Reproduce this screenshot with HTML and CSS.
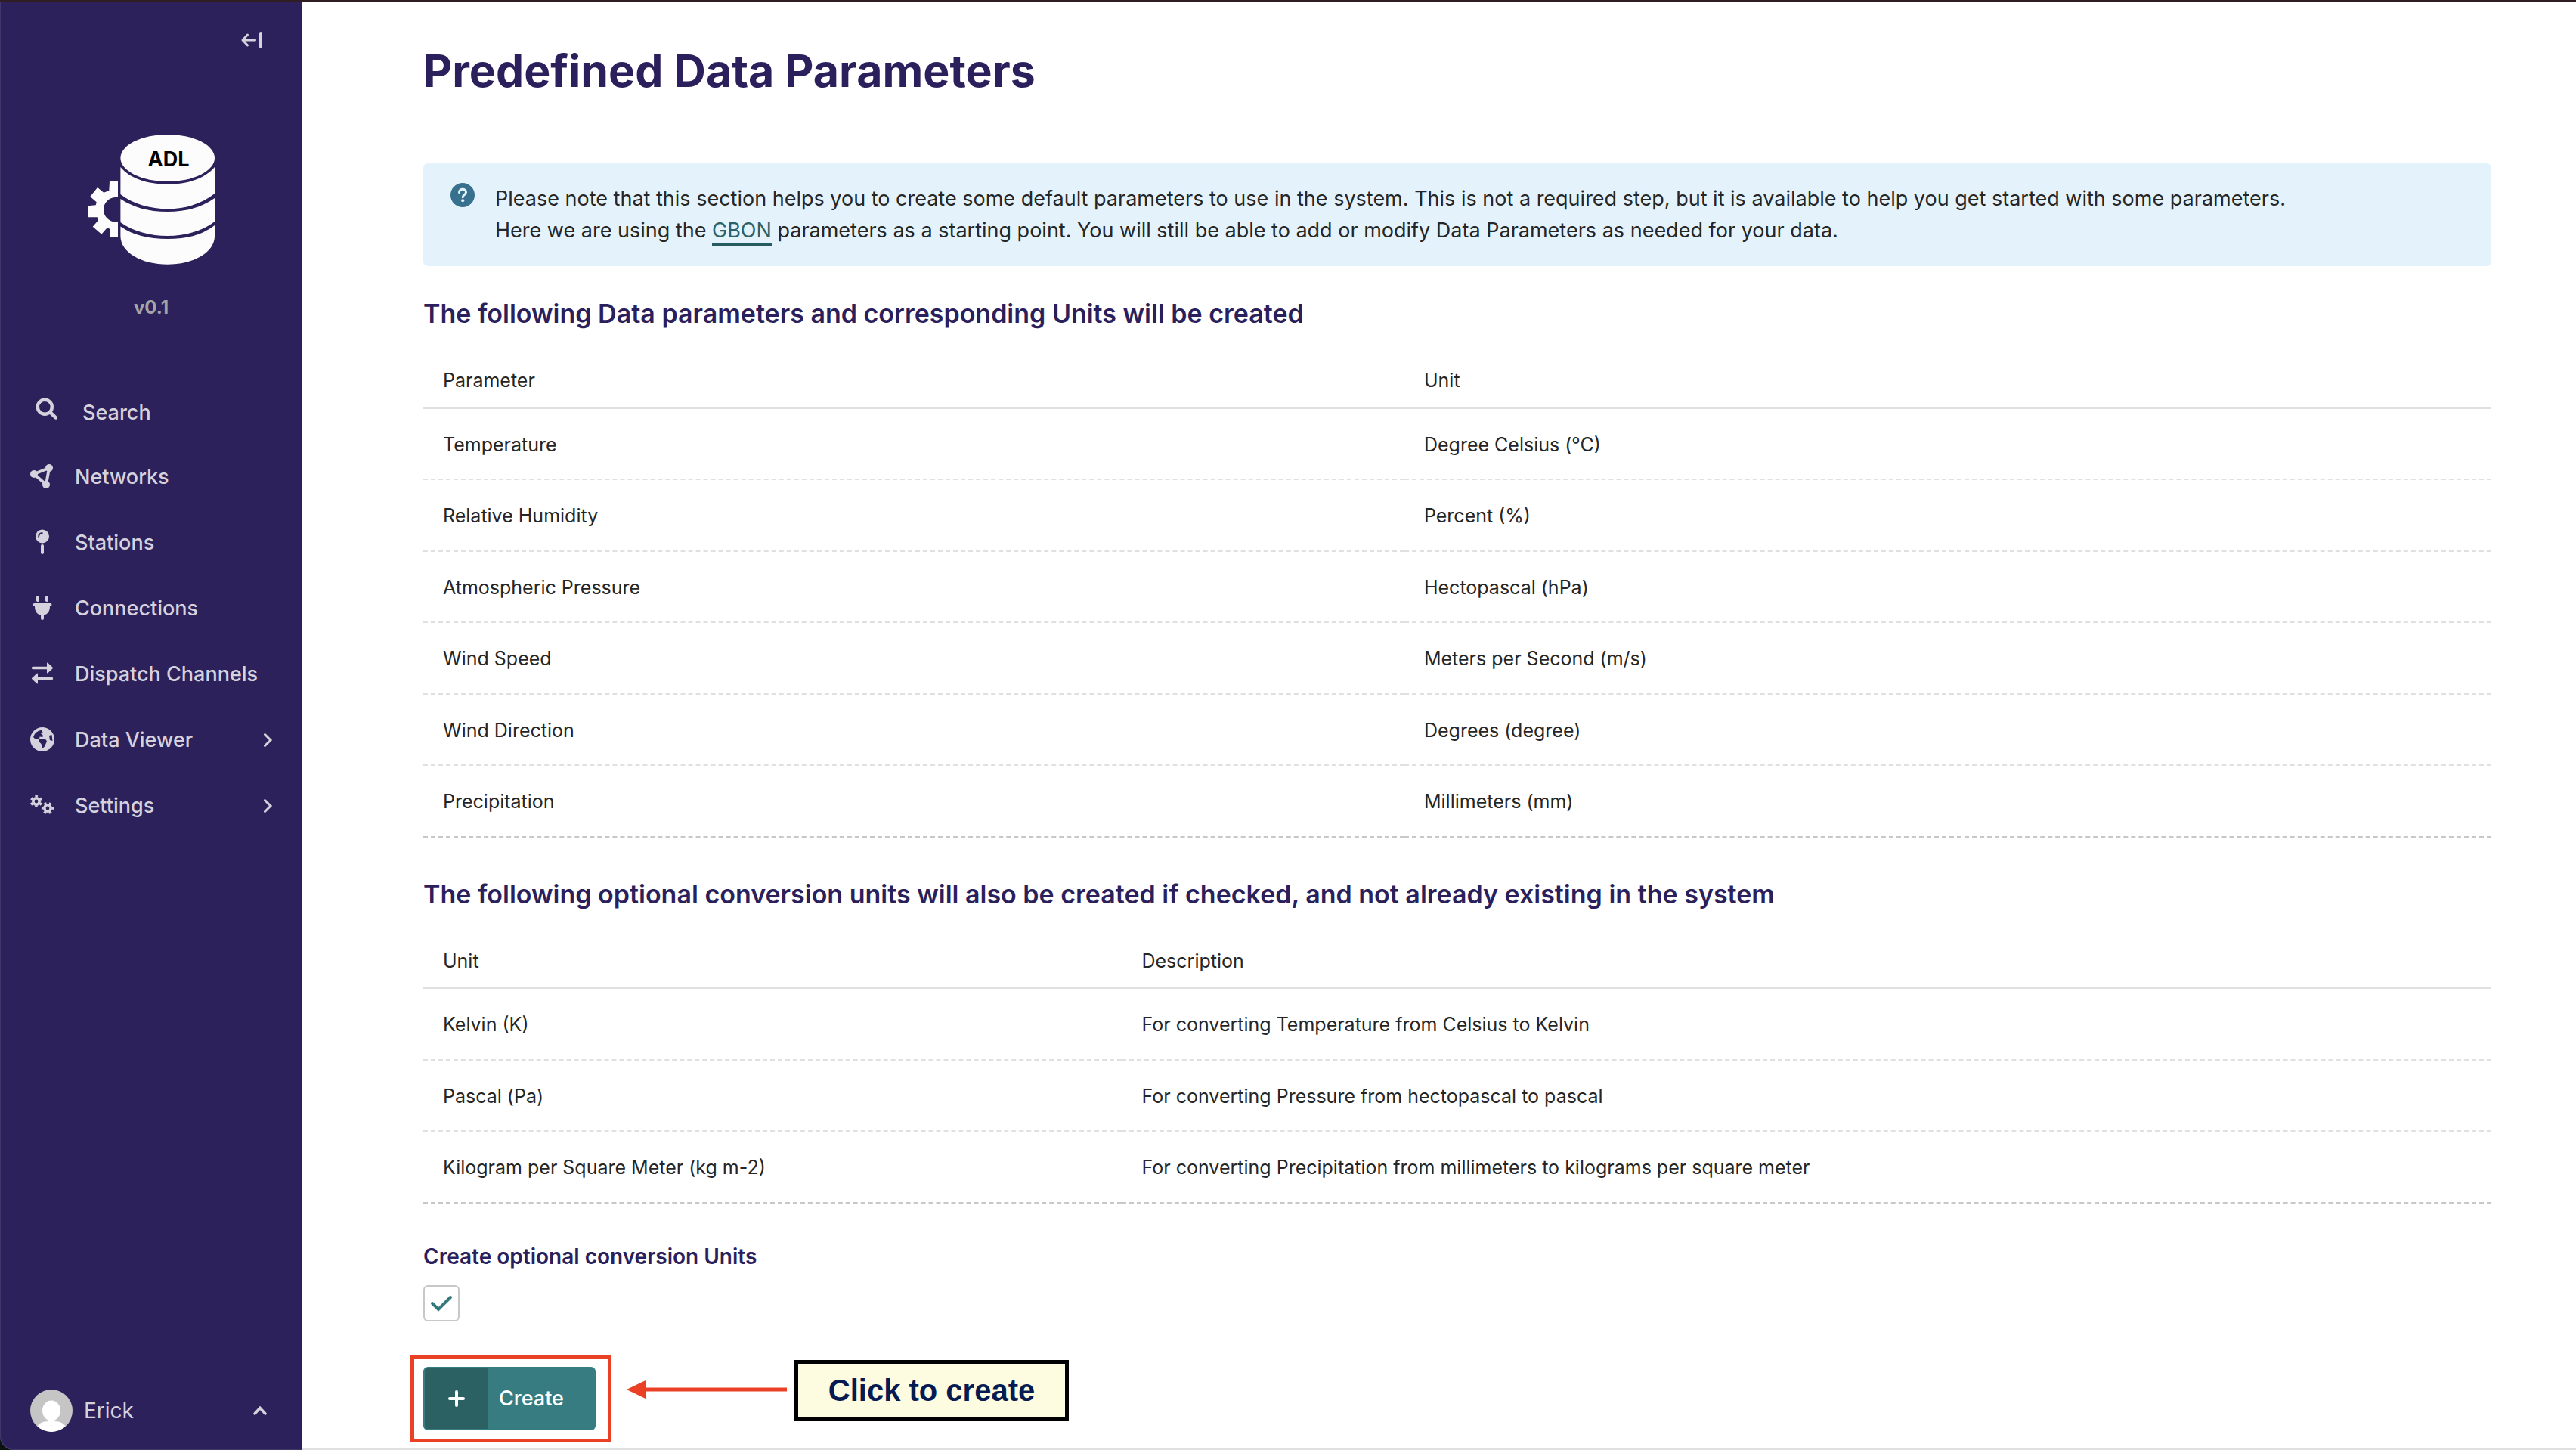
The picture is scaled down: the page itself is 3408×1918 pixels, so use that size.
FILE: index.html
```html
<!DOCTYPE html>
<html lang="en">
<head>
<meta charset="utf-8">
<title>Predefined Data Parameters</title>
<link rel="stylesheet" href="styles.css">
</head>
<body>
<div class="shell">
  <aside class="sidebar">
    <div class="sidebar-top">
      <button class="icon-button" type="button" aria-label="Collapse sidebar">
        <svg width="28" height="22" viewBox="0 0 28 22" fill="none" stroke="currentColor" stroke-linecap="round" stroke-linejoin="round">
          <path d="M18.500 11H2M8.500 4L2 11l6.500 7" stroke-width="3"/>
          <path d="M26 2v18" stroke-width="4"/>
        </svg>
      </button>
    </div>
    <a class="logo" href="#" aria-label="ADL home">
      <svg width="168" height="172" viewBox="0 0 168 172" fill="#fdfcfc">
        <ellipse cx="105.700" cy="31" rx="62.300" ry="31"/>
        <path d="M43.400 43C55 57 77 65.700 105.700 65.700S156 57 168 43V78C150 92 128 98.300 105.700 98.300S60 92 43.400 79Z"/>
        <path d="M43.400 85C60 96 80 102 105.700 102S151 96 168 84V115C151 128 128 134 105.700 134S60 128 43.400 116Z"/>
        <path d="M43.400 121.500C60 133 80 138 105.700 138S151 133 168 120V134C168 156 140 171.700 105.700 171.700S43.400 156 43.400 134Z"/>
        <path d="M29 62H40V83H36A16.300 16.300 0 0 0 36 115.500H40V136H30L29.300 124.700 25.700 123.300 18.300 131.700 6.700 121.700 13.700 113.700 12.700 109.300H0V94.300L10.700 93.300 11.700 89.300 3.300 82 13 70 21.300 76.700 28.300 74Z"/>
        <text class="logo-text" x="107" y="42" text-anchor="middle">ADL</text>
      </svg>
    </a>
    <p class="version">v0.1</p>
    <nav class="menu" aria-label="Main">
      <a class="menu-item menu-search" href="#">
        <svg class="menu-icon" viewBox="0 0 32 32" fill="none" stroke="currentColor"><circle cx="13.300" cy="9.300" r="9.500" stroke-width="4.400"/><path d="M20.500 16.500l7.200 6.800" stroke-width="4.600" stroke-linecap="round"/></svg>
        <span>Search</span>
      </a>
      <a class="menu-item" href="#">
        <svg class="menu-icon" viewBox="0 0 32 32" fill="currentColor"><path d="M5 12L25 4 21 26Z" fill="none" stroke="currentColor" stroke-width="4"/><circle cx="5" cy="12" r="5"/><circle cx="25" cy="4" r="5"/><circle cx="21" cy="26" r="5"/></svg>
        <span>Networks</span>
      </a>
      <a class="menu-item" href="#">
        <svg class="menu-icon" viewBox="0 0 32 32" fill="currentColor"><circle cx="16" cy="7.500" r="9"/><path d="M11 8.500C11 5 13 3.200 16.500 3" fill="none" stroke="#2c215a" stroke-width="1.800"/><path d="M16 20v9" stroke="currentColor" stroke-width="4" stroke-linecap="round"/></svg>
        <span>Stations</span>
      </a>
      <a class="menu-item" href="#">
        <svg class="menu-icon" viewBox="0 0 32 32" fill="currentColor"><rect x="8" y="-1" width="4" height="8" rx="1.800"/><rect x="20" y="-1" width="4" height="8" rx="1.800"/><path d="M5.500 9h21a1.500 1.500 0 0 1 0 4h-.5c0 6-2.500 10.500-8 11.500V29a2 2 0 0 1-4 0v-4.500C8.500 23.500 6 19 6 13h-.5a1.500 1.500 0 0 1 0-4z"/></svg>
        <span>Connections</span>
      </a>
      <a class="menu-item" href="#">
        <svg class="menu-icon" viewBox="0 0 32 32" fill="currentColor"><path d="M3.500 7.500H24M28.500 21.500H8" stroke="currentColor" stroke-width="3.400" stroke-linecap="round"/><path d="M22 1.500q0-1.500 1.200-.7l6.500 6q.7.700 0 1.400l-6.500 6q-1.200.800-1.200-.7zM10 15.500q0-1.500-1.200-.7l-6.500 6q-.7.700 0 1.400l6.500 6q1.200.800 1.200-.7z"/></svg>
        <span>Dispatch Channels</span>
      </a>
      <a class="menu-item" href="#">
        <svg class="menu-icon" viewBox="0 0 32 32"><circle cx="16" cy="15" r="16" fill="currentColor"/><path d="M4 12Q6 4 15.500 2.500L16.500 6 14 7.500 16.500 9V12L12.500 11.500 12 14.500 20.500 15.300 22 17.500 19 24.500 16 27 14.500 21 11.500 18V15L6 14ZM25 10L28.500 9 29.500 17 26 16Z" fill="#2c215a"/></svg>
        <span>Data Viewer</span>
        <svg class="menu-arrow" viewBox="0 0 12 20" fill="none" stroke="currentColor" stroke-width="3" stroke-linecap="round"><path d="M2.500 2.500L10 10l-7.500 7.500"/></svg>
      </a>
      <a class="menu-item" href="#">
        <svg class="menu-icon" viewBox="0 0 32 32" fill="none" stroke="currentColor"><circle cx="8" cy="10" r="4.200" stroke-width="3.600"/><circle cx="8" cy="10" r="6.800" stroke-width="2.600" stroke-dasharray="3.560" transform="rotate(15 8 10)"/><circle cx="23" cy="19" r="4.200" stroke-width="3.600"/><circle cx="23" cy="19" r="6.800" stroke-width="2.600" stroke-dasharray="3.560" transform="rotate(-15 23 19)"/></svg>
        <span>Settings</span>
        <svg class="menu-arrow" viewBox="0 0 12 20" fill="none" stroke="currentColor" stroke-width="3" stroke-linecap="round"><path d="M2.500 2.500L10 10l-7.500 7.500"/></svg>
      </a>
    </nav>
    <button class="account" type="button">
      <svg class="avatar" viewBox="0 0 56 56"><defs><clipPath id="avatar-clip"><circle cx="28" cy="28" r="28"/></clipPath></defs><g clip-path="url(#avatar-clip)"><path fill="#c5c5c5" d="M0 0h56v56H0z"/><ellipse cx="28" cy="28" rx="12" ry="13.500" fill="#fff"/><path d="M24 38h8v4c8 0 14 3 16 10v4H8v-4c2-7 8-10 16-10z" fill="#fff"/></g></svg>
      <span>Erick</span>
      <svg class="account-arrow" viewBox="0 0 18 12" fill="none" stroke="currentColor" stroke-width="3.600" stroke-linecap="round"><path d="M2 10l7-7.500 7 7.500"/></svg>
    </button>
  </aside>

  <main class="content">
    <h1>Predefined Data Parameters</h1>

    <div class="notice">
      <svg class="notice-icon" viewBox="0 0 32 32"><circle cx="16" cy="16" r="16" fill="#37718e"/><path d="M11.500 12.500c0-5.500 9-5.500 9-.3 0 3.300-4.300 3.300-4.300 6.500" fill="none" stroke="#e4f3fb" stroke-width="3" stroke-linecap="round"/><circle cx="16.200" cy="23.300" r="2" fill="#e4f3fb"/></svg>
      <p>Please note that this section helps you to create some default parameters to use in the system. This is not a required step, but it is available to help you get started with some parameters.<br>Here we are using the <a href="#">GBON</a> parameters as a starting point. You will still be able to add or modify Data Parameters as needed for your data.</p>
    </div>

    <h2>The following Data parameters and corresponding Units will be created</h2>
    <table class="listing listing-parameters">
      <thead><tr><th scope="col">Parameter</th><th scope="col">Unit</th></tr></thead>
      <tbody>
        <tr><td>Temperature</td><td>Degree Celsius (°C)</td></tr>
        <tr><td>Relative Humidity</td><td>Percent (%)</td></tr>
        <tr><td>Atmospheric Pressure</td><td>Hectopascal (hPa)</td></tr>
        <tr><td>Wind Speed</td><td>Meters per Second (m/s)</td></tr>
        <tr><td>Wind Direction</td><td>Degrees (degree)</td></tr>
        <tr><td>Precipitation</td><td>Millimeters (mm)</td></tr>
      </tbody>
    </table>

    <h2>The following optional conversion units will also be created if checked, and not already existing in the system</h2>
    <table class="listing listing-units">
      <thead><tr><th scope="col">Unit</th><th scope="col">Description</th></tr></thead>
      <tbody>
        <tr><td>Kelvin (K)</td><td>For converting Temperature from Celsius to Kelvin</td></tr>
        <tr><td>Pascal (Pa)</td><td>For converting Pressure from hectopascal to pascal</td></tr>
        <tr><td>Kilogram per Square Meter (kg m-2)</td><td>For converting Precipitation from millimeters to kilograms per square meter</td></tr>
      </tbody>
    </table>

    <form class="create-form">
      <label for="create-units">Create optional conversion Units</label>
      <div class="checkbox">
        <input type="checkbox" id="create-units" checked>
        <svg class="checkbox-mark" viewBox="0 0 48 48" fill="none" stroke="#347a7d" stroke-width="4" stroke-linecap="round"><path d="M12 24l8 8 16-16"/></svg>
      </div>
      <div class="action">
        <button class="create-button" type="submit">
          <span class="create-icon"><svg width="24" height="24" viewBox="0 0 24 24" fill="none" stroke="currentColor" stroke-width="4" stroke-linecap="round"><path d="M12 3v18M3 12h18"/></svg></span>
          <span class="create-text">Create</span>
        </button>
        <div class="highlight"></div>
        <svg class="pointer" viewBox="0 0 212 24" fill="#ea4025"><path d="M0 12L25 0v9.500h187v5H25V24z"/></svg>
        <div class="callout">Click to create</div>
      </div>
    </form>
  </main>
</div>
</body>
</html>
```
FILE: styles.css
```css
* { box-sizing: border-box; }

body {
  margin: 0;
  border-top: 2px solid #2f1d24;
  background: #0c120d;
  color: #262626;
  font-family: Inter, "Liberation Sans", sans-serif;
}

h1, h2, p { margin: 0; }

svg { display: block; overflow: visible; flex: none; }

button {
  padding: 0;
  border: 0;
  background: none;
  color: inherit;
  font: inherit;
}

.shell {
  display: flex;
  min-height: calc(100vh - 2px);
}

/* Sidebar */

.sidebar {
  display: flex;
  flex-direction: column;
  flex: none;
  width: 400px;
  border-bottom-left-radius: 18px;
  background: #2c215a;
  box-shadow: inset 1px -1px #40376b;
  color: #d5d2de;
}

.sidebar-top {
  display: flex;
  justify-content: flex-end;
  padding: 40px 53px 0;
}

.logo { align-self: center; margin-top: 114px; }

.logo-text { fill: #000; font-size: 27px; font-weight: 700; }

.version {
  margin-top: 42px;
  color: #a5a5a5;
  font-size: 24px;
  font-weight: 700;
  line-height: 30px;
  text-align: center;
}

.menu {
  display: flex;
  flex-direction: column;
  margin-top: 81px;
  font-size: 27px;
  font-weight: 500;
}

.menu-item {
  display: flex;
  align-items: center;
  gap: 27px;
  height: 87px;
  padding: 0 40px;
  color: inherit;
  text-decoration: none;
}

.menu-search { gap: 31px; height: 84px; padding-left: 46px; }

.menu-icon { width: 32px; height: 32px; }

.menu-arrow { width: 12px; height: 20px; margin-left: auto; }

.account {
  display: flex;
  align-items: center;
  gap: 15px;
  margin-top: auto;
  padding: 0 47px 24px 40px;
  font-size: 28px;
}

.avatar { width: 56px; height: 56px; }

.account-arrow { width: 18px; height: 12px; margin-left: auto; }

/* Content */

.content {
  flex: 1;
  min-width: 0;
  padding: 57px 112px 24px 160px;
  border-bottom: 2px solid #e0e0e0;
  background: #fff;
}

h1 {
  color: #2b1f5c;
  font-size: 59px;
  font-weight: 700;
  line-height: 70px;
}

.notice {
  display: flex;
  gap: 27px;
  margin: 87px 0 39px;
  padding: 26px 36px;
  border-radius: 6px;
  background: #e4f3fb;
  font-size: 27px;
  line-height: 42px;
}

.notice-icon { width: 32px; height: 32px; }

.notice a {
  border-bottom: 4px solid #265c5f;
  color: #2b6265;
  text-decoration: none;
}

h2 {
  color: #2b1f5c;
  font-size: 34px;
  font-weight: 600;
  line-height: 48px;
}

.listing {
  width: 100%;
  margin: 29px 0 51px;
  border-spacing: 0;
  font-size: 25px;
  line-height: 1.42;
  table-layout: fixed;
}

.listing th {
  padding: 18px 26px 17px;
  border-bottom: 2px solid #e0e0e0;
  font-weight: 400;
  text-align: left;
}

.listing td {
  padding: 30px 26px 27px;
  border-bottom: 2px dashed #e0e0e0;
}

.listing tr:last-child td { border-bottom-color: #c8c8c8; }

.listing-parameters th:first-child { width: 47.440%; }

.listing-units { margin-bottom: 50px; }

.listing-units th:first-child { width: 33.790%; }

.create-form label {
  display: block;
  color: #2b1f5c;
  font-size: 28px;
  font-weight: 600;
  line-height: 40px;
}

.checkbox {
  position: relative;
  width: 48px;
  height: 48px;
  margin: 18px 0 60px;
}

.checkbox input {
  display: block;
  width: 100%;
  height: 100%;
  margin: 0;
  border: 2px solid #c8c8c8;
  border-radius: 6px;
  background: #fff;
  appearance: none;
}

.checkbox-mark {
  position: absolute;
  inset: 0;
  pointer-events: none;
}

.checkbox input:not(:checked) + .checkbox-mark { display: none; }

.action { position: relative; width: max-content; }

.create-button {
  display: flex;
  height: 84px;
  border: 2px solid #377c80;
  border-radius: 6px;
  background: #377c80;
  color: #fff;
  font-size: 27px;
  font-weight: 500;
}

.create-icon {
  display: flex;
  align-items: center;
  justify-content: center;
  width: 84px;
  height: 100%;
  border-radius: 4px 0 0 4px;
  background: #2b6163;
}

.create-text {
  align-self: center;
  padding: 0 40px 0 14px;
}

/* Walkthrough annotations laid over the page */

.highlight {
  position: absolute;
  inset: -16px -21px -16px -17px;
  border: 5px solid #ea4025;
  pointer-events: none;
}

.pointer {
  position: absolute;
  top: 18px;
  left: 269px;
  width: 212px;
  height: 24px;
}

.callout {
  position: absolute;
  top: -9px;
  left: 491px;
  display: flex;
  align-items: center;
  justify-content: center;
  width: 363px;
  height: 80px;
  padding-top: 2px;
  border: 5px solid #000;
  background: #fefce0;
  color: #061b52;
  font: 700 40px "Liberation Sans", Arial, sans-serif;
  white-space: nowrap;
}
```
